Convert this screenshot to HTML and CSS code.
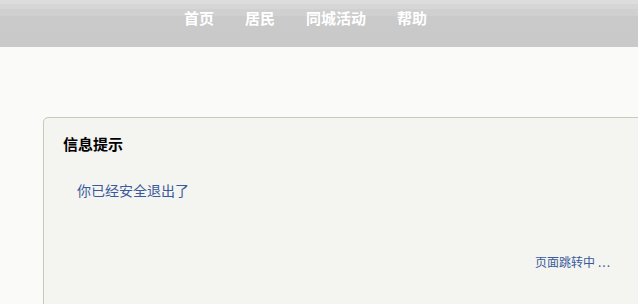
FILE: index.html
```html
<!DOCTYPE html>
<html lang="zh-CN">
<head>
<meta charset="utf-8">
<title>信息提示</title>
<link rel="stylesheet" href="styles.css">
</head>
<body>
<header class="topbar">
  <nav class="nav">
    <a class="nav-item" href="#">首页</a>
    <a class="nav-item" href="#">居民</a>
    <a class="nav-item" href="#">同城活动</a>
    <a class="nav-item" href="#">帮助</a>
  </nav>
</header>
<main class="main">
  <section class="msgbox">
    <h2 class="msg-title">信息提示</h2>
    <p class="msg-text">你已经安全退出了</p>
    <p class="msg-redirect">页面跳转中<span class="dots">...</span></p>
  </section>
</main>
</body>
</html>
```

FILE: styles.css
```css
html, body {
  margin: 0;
  padding: 0;
}
body {
  background: #fafaf8;
  font-family: "Noto Sans CJK SC", "Liberation Sans", sans-serif;
  overflow: hidden;
  width: 638px;
  height: 304px;
}
.topbar {
  height: 47px;
  box-sizing: border-box;
  padding-top: 10px;
  background: linear-gradient(to bottom, #dddddd 0px, #dddddd 4px, #d6d6d6 4px, #d6d6d6 9px, #d0d0d0 9px, #d0d0d0 16px, #cacaca 16px, #c9c9c9 100%);
}
.nav {
  display: flex;
  gap: 31px;
  padding-left: 184px;
}
.nav-item {
  color: #ffffff;
  font-weight: bold;
  font-size: 15px;
  line-height: 16px;
  text-decoration: none;
}
.main {
  height: 257px;
  box-sizing: border-box;
  overflow: hidden;
  padding-top: 70px;
  padding-left: 43px;
}
.msgbox {
  width: 620px;
  height: 220px;
  background: #f4f4f1;
  border: 1px solid #c8c9b6;
  border-radius: 5px;
  box-sizing: border-box;
  padding: 18px 0 0 19px;
}
.msg-title {
  margin: 0;
  font-size: 15px;
  line-height: 16px;
  font-weight: bold;
  color: #000000;
}
.msg-text {
  margin: 31px 0 0 14px;
  font-size: 14px;
  line-height: 15px;
  color: #3a5a9b;
}
.msg-redirect {
  margin: 57px 0 0 472px;
  font-size: 12px;
  line-height: 13px;
  color: #3a5a9b;
}
.dots {
  margin-left: 3px;
  letter-spacing: 1px;
}
```
